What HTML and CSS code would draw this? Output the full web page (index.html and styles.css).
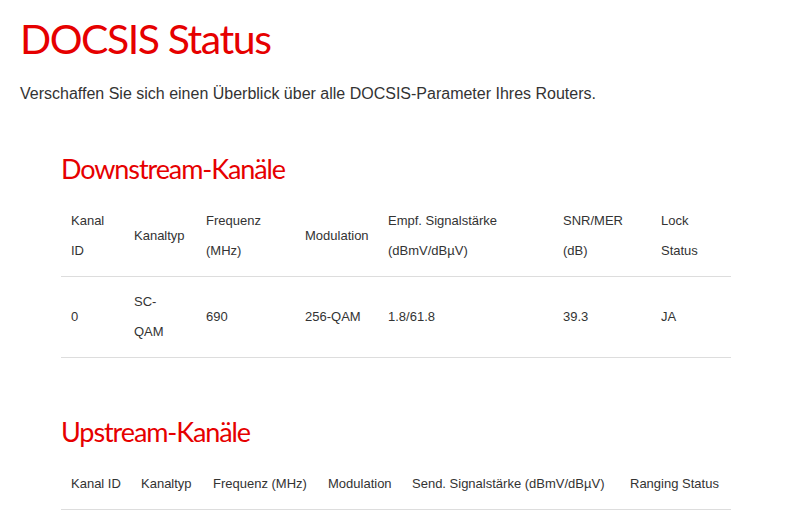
FILE: index.html
```html
<!DOCTYPE html>
<html lang="de">
<head>
<meta charset="utf-8">
<title>DOCSIS Status</title>
<link rel="stylesheet" href="styles.css">
</head>
<body>
<main class="page">
  <h1 class="title">DOCSIS Status</h1>
  <p class="intro">Verschaffen Sie sich einen Überblick über alle DOCSIS-Parameter Ihres Routers.</p>

  <section class="channels channels-down">
    <h2 class="section-title">Downstream-Kanäle</h2>
    <table class="data">
      <thead>
        <tr>
          <th class="d1">Kanal ID</th>
          <th class="d2">Kanaltyp</th>
          <th class="d3">Frequenz (MHz)</th>
          <th class="d4">Modulation</th>
          <th class="d5">Empf. Signalstärke (dBmV/dBµV)</th>
          <th class="d6">SNR/MER (dB)</th>
          <th class="d7">Lock Status</th>
        </tr>
      </thead>
      <tbody>
        <tr>
          <td>0</td>
          <td class="type">SC-QAM</td>
          <td>690</td>
          <td>256-QAM</td>
          <td>1.8/61.8</td>
          <td>39.3</td>
          <td>JA</td>
        </tr>
      </tbody>
    </table>
  </section>

  <section class="channels channels-up">
    <h2 class="section-title">Upstream-Kanäle</h2>
    <table class="data">
      <thead>
        <tr>
          <th class="u1">Kanal ID</th>
          <th class="u2">Kanaltyp</th>
          <th class="u3">Frequenz (MHz)</th>
          <th class="u4">Modulation</th>
          <th class="u5">Send. Signalstärke (dBmV/dBµV)</th>
          <th class="u6">Ranging Status</th>
        </tr>
      </thead>
    </table>
  </section>
</main>
</body>
</html>
```

FILE: styles.css
```css
html, body {
  margin: 0;
  padding: 0;
  background: #ffffff;
}

body {
  font-family: "Liberation Sans", Arial, sans-serif;
  color: #333333;
}

.page {
  padding: 14px 20px 0 20px;
}

.title {
  margin: 0;
  font-family: Lato, sans-serif;
  font-weight: 400;
  font-size: 41px;
  line-height: 50px;
  letter-spacing: -1.45px;
  color: #e60000;
}

.intro {
  margin: 19.5px 0 0 0;
  font-size: 16px;
  line-height: 20px;
}

.channels {
  margin-left: 41px;
  width: 670px;
}

.channels-down {
  margin-top: 47px;
}

.channels-up {
  margin-top: 55.5px;
}

.section-title {
  margin: 0 0 9.5px 0;
  font-family: Lato, sans-serif;
  font-weight: 400;
  font-size: 27px;
  line-height: 36px;
  letter-spacing: -1.1px;
  color: #e60000;
}

.data {
  width: 670px;
  border-collapse: collapse;
  table-layout: fixed;
  font-size: 13px;
  line-height: 30px;
}

.data th,
.data td {
  padding: 10px;
  text-align: left;
  font-weight: 400;
  vertical-align: middle;
  border-bottom: 1px solid #dddddd;
}

.data td.type {
  padding-right: 24px;
}

.d1 { width: 43px; }
.d2 { width: 52px; }
.d3 { width: 79px; }
.d4 { width: 63px; }
.d5 { width: 155px; }
.d6 { width: 78px; }
.d7 { width: 60px; }

.u1 { width: 50px; }
.u2 { width: 52px; }
.u3 { width: 95px; }
.u4 { width: 64px; }
.u5 { width: 198px; }
.u6 { width: 91px; }
```
